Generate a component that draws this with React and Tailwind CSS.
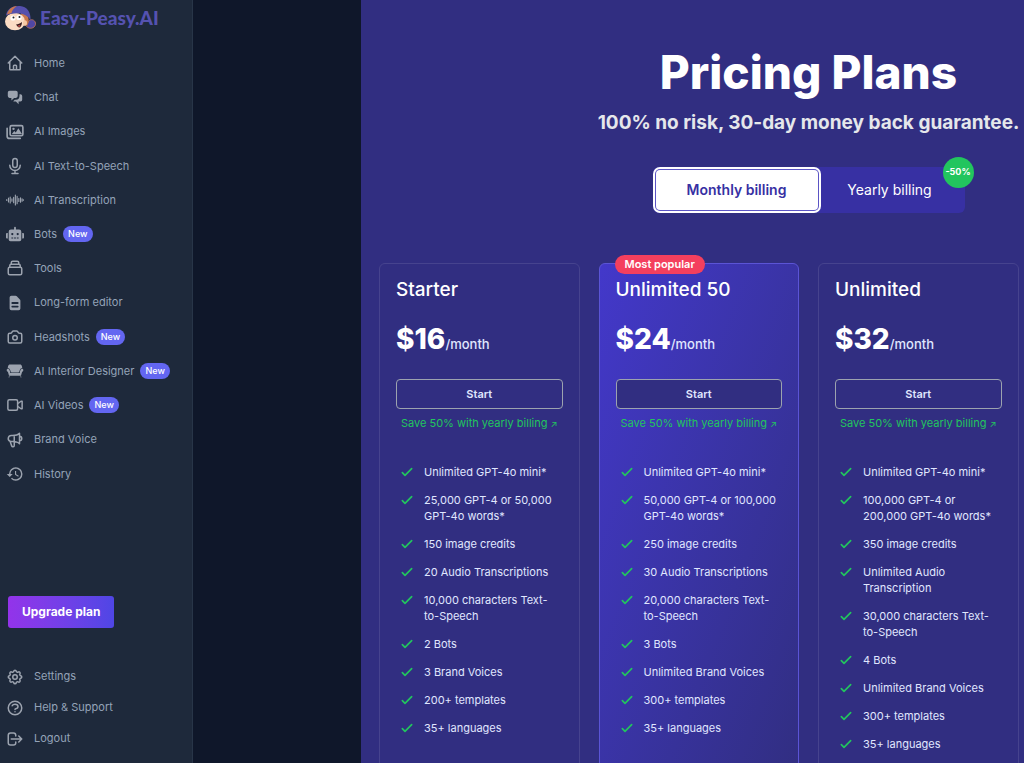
import { useState } from "react";
import {
  HiOutlineHome,
  HiChatAlt2,
  HiOutlineMicrophone,
  HiOutlineCollection,
  HiDocumentText,
  HiOutlineCamera,
  HiOutlineSpeakerphone,
  HiOutlineCog,
  HiOutlineQuestionMarkCircle,
  HiOutlineLogout,
  HiOutlineCheck,
} from "react-icons/hi";
import { FaRobot } from "react-icons/fa";
import { GiSofa } from "react-icons/gi";
import { MdHistory } from "react-icons/md";

function ImagesIcon({ className }) {
  return (
    <svg viewBox="0 0 24 24" fill="none" stroke="currentColor" strokeWidth="2.2" className={className}>
      <rect x="5.500" y="3.500" width="17" height="13.500" rx="2" />
      <path d="M1.500 7v10.500a3 3 0 003 3H19" strokeLinecap="round" />
      <path d="M7.500 15l3.500-4.500 2 2 3.500-5.500 5 8z" fill="currentColor" stroke="none" />
      <circle cx="10" cy="7.800" r="1.600" fill="currentColor" stroke="none" />
    </svg>
  );
}

function WaveIcon({ className }) {
  return (
    <svg viewBox="0 0 24 24" fill="none" stroke="currentColor" strokeWidth="1.500" strokeLinecap="round" className={className}>
      <path d="M1 11.500v1M3.300 9.500v5M5.600 8v8M7.900 10.500v3M10.200 8.500v7M12.500 5.500v13M14.800 7v10M17.100 10v4M19.400 9v6M21.500 10.500v3M23.300 11.700v.6" />
    </svg>
  );
}

function VideoIcon({ className }) {
  return (
    <svg viewBox="0 0 24 24" fill="none" stroke="currentColor" strokeWidth="2" strokeLinejoin="round" className={className}>
      <rect x="2.500" y="5" width="13" height="14" rx="2" />
      <path d="M16 10l4-3h1.500v10H20l-4-3" />
    </svg>
  );
}

const mainLinks = [
  { label: "Home", icon: HiOutlineHome },
  { label: "Chat", icon: HiChatAlt2 },
  { label: "AI Images", icon: ImagesIcon },
  { label: "AI Text-to-Speech", icon: HiOutlineMicrophone },
  { label: "AI Transcription", icon: WaveIcon },
  { label: "Bots", icon: FaRobot, isNew: true },
  { label: "Tools", icon: HiOutlineCollection },
  { label: "Long-form editor", icon: HiDocumentText },
  { label: "Headshots", icon: HiOutlineCamera, isNew: true },
  { label: "AI Interior Designer", icon: GiSofa, isNew: true },
  { label: "AI Videos", icon: VideoIcon, isNew: true },
  { label: "Brand Voice", icon: HiOutlineSpeakerphone },
  { label: "History", icon: MdHistory },
];

const footerLinks = [
  { label: "Settings", icon: HiOutlineCog },
  { label: "Help & Support", icon: HiOutlineQuestionMarkCircle },
  { label: "Logout", icon: HiOutlineLogout },
];

const plans = [
  {
    name: "Starter",
    price: 16,
    features: [
      "Unlimited GPT-4o mini*",
      "25,000 GPT-4 or 50,000 GPT-4o words*",
      "150 image credits",
      "20 Audio Transcriptions",
      "10,000 characters Text-to-Speech",
      "2 Bots",
      "3 Brand Voices",
      "200+ templates",
      "35+ languages",
    ],
  },
  {
    name: "Unlimited 50",
    price: 24,
    popular: true,
    features: [
      "Unlimited GPT-4o mini*",
      "50,000 GPT-4 or 100,000 GPT-4o words*",
      "250 image credits",
      "30 Audio Transcriptions",
      "20,000 characters Text-to-Speech",
      "3 Bots",
      "Unlimited Brand Voices",
      "300+ templates",
      "35+ languages",
    ],
  },
  {
    name: "Unlimited",
    price: 32,
    features: [
      "Unlimited GPT-4o mini*",
      "100,000 GPT-4 or 200,000 GPT-4o words*",
      "350 image credits",
      "Unlimited Audio Transcription",
      "30,000 characters Text-to-Speech",
      "4 Bots",
      "Unlimited Brand Voices",
      "300+ templates",
      "35+ languages",
    ],
  },
];

function Logo() {
  return (
    <a href="#" className="flex items-center gap-1 pl-1 h-9">
      <svg viewBox="0 0 32 27" className="w-8 h-7 shrink-0" aria-hidden="true">
        <path d="M25 16c3-2 7 0 6.500 4-1 4-6 5-9 2z" fill="#4f46a5" stroke="#a86a5c" strokeWidth="1" />
        <path d="M17 8c6-1 9 5 7 11-1 3-5 3-6 0z" fill="#c9774d" />
        <ellipse cx="11" cy="17" rx="10" ry="8.800" fill="#fbdcc4" />
        <ellipse cx="21" cy="18.500" rx="2" ry="2.800" fill="#f7c9a5" />
        <path d="M2 11C3 4 9 1 16 1.500c7 .5 11 6 10.500 14-3-4-6-6-10-6.500-5-.5-10 0-14.500 2z" fill="#5550ad" />
        <path d="M3 10c1-5 5-8 10-8.500-3 2-5 4-5.500 7z" fill="#c9774d" />
        <circle cx="9" cy="13.500" r="2.600" fill="#fff" />
        <circle cx="15" cy="13" r="2.600" fill="#fff" />
        <circle cx="9.500" cy="13" r="1" fill="#222" />
        <circle cx="15.500" cy="12.500" r="1" fill="#222" />
        <path d="M12 20c2 0 4-1 6-2.500 0 2.500-1 5-2.500 5.500-1.500 0-2.500-1.500-3.500-3z" fill="#3b1d1d" />
        <path d="M13.500 21.500c1-1 2-1 3-.5-1 1.500-1.500 1.500-3 .5z" fill="#e0605a" />
      </svg>
      <span className="font-['Lato'] font-black text-[19px] text-[#5552b0]">Easy-Peasy.AI</span>
    </a>
  );
}

function NavLink({ label, icon: Icon, isNew }) {
  return (
    <a href="#" className="flex items-center text-[11px] text-[#94a3b8] hover:text-white">
      <Icon className="w-[18px] h-[18px] mr-[10px] shrink-0 text-[#9ca3af]" />
      <span>{label}</span>
      {isNew && (
        <span className="ml-[6px] px-[5px] h-4 leading-4 rounded-full bg-[#6366f1] text-[9px] font-medium text-white">
          New
        </span>
      )}
    </a>
  );
}

function Sidebar() {
  return (
    <aside className="w-[193px] shrink-0 min-h-screen flex flex-col bg-[#1e293b] border-r border-[#283548]">
      <Logo />
      <nav className="mt-[10px] pl-[6px] grid auto-rows-fr h-[445px]">
        {mainLinks.map((link) => (
          <NavLink key={link.label} {...link} />
        ))}
      </nav>
      <div className="mt-auto pl-2">
        <button
          type="button"
          className="h-8 px-[14px] rounded-[3px] bg-gradient-to-r from-[#9333ea] to-[#4f46e5] text-[12px] font-bold text-white"
        >
          Upgrade plan
        </button>
      </div>
      <nav className="mt-[33px] mb-[9px] pl-[6px] grid auto-rows-[31px]">
        {footerLinks.map((link) => (
          <NavLink key={link.label} {...link} />
        ))}
      </nav>
    </aside>
  );
}

function BillingToggle({ billing, onChange }) {
  const active = "bg-white text-[#3730a3] font-semibold shadow-[0_0_0_1px_#5b54c4,0_0_0_3px_#fff]";
  const idle = "text-white";

  return (
    <div className="relative flex p-[3px] h-[46px] w-[312px] rounded-md bg-[#3730a3] text-sm">
      <button
        type="button"
        onClick={() => onChange("monthly")}
        className={`w-[162px] rounded ${billing === "monthly" ? active : idle}`}
      >
        Monthly billing
      </button>
      <button
        type="button"
        onClick={() => onChange("yearly")}
        className={`flex-1 rounded ${billing === "yearly" ? active : idle}`}
      >
        Yearly billing
      </button>
      <span className="absolute -top-[10px] -right-[9px] w-[31px] h-[31px] rounded-full bg-[#22c55e] flex items-center justify-center text-[9px] font-bold text-white">
        -50%
      </span>
    </div>
  );
}

function PlanCard({ plan }) {
  return (
    <div
      className={`relative rounded-md border px-4 pb-8 ${
        plan.popular
          ? "border-[#5b54d6] bg-gradient-to-br from-[#4338ca] to-[#312e81]"
          : "border-[#46438e]"
      }`}
    >
      {plan.popular && (
        <span className="absolute -top-[9px] left-[15px] h-[19px] px-[10px] rounded-full bg-[#f43f5e] text-[11px] leading-[19px] font-semibold text-white">
          Most popular
        </span>
      )}
      <h3 className="mt-3 text-[19px] leading-7 font-medium text-white">{plan.name}</h3>
      <p className="mt-[17px] flex items-baseline text-white">
        <span className="text-[28px] leading-9 font-extrabold">${plan.price}</span>
        <span className="text-[13px] font-medium text-[#e0e7ff]">/month</span>
      </p>
      <button
        type="button"
        className="mt-[22px] w-full h-[30px] rounded border border-[#9ca3af] bg-[#312e81] text-[11px] font-semibold text-[#e0e7ff]"
      >
        Start
      </button>
      <a href="#" className="mt-[6px] block text-center text-[11px] leading-4 text-[#22c55e]">
        Save 50% with yearly billing <span className="text-[9px]">↗</span>
      </a>
      <ul className="mt-8 pl-[2px] pr-1 space-y-3">
        {plan.features.map((feature) => (
          <li key={feature} className="flex text-[11px] leading-4 text-[#e0e7ff]">
            <HiOutlineCheck className="w-[18px] h-4 mr-2 shrink-0 text-[#22c55e] [&_path]:stroke-[2.5]" />
            <span>{feature}</span>
          </li>
        ))}
      </ul>
    </div>
  );
}

export default function App() {
  const [billing, setBilling] = useState("monthly");

  return (
    <div className="flex h-screen overflow-hidden bg-[#0f172a] font-[Inter,sans-serif]">
      <Sidebar />
      <main className="flex-1 min-w-0 flex overflow-hidden">
        {/* Four plan columns wide, it runs past the right edge on small screens */}
        <section className="ml-[168px] min-w-[895px] flex-1 px-[18px] pt-12 bg-[#312e81]">
          <div className="flex flex-col items-center">
            <h1 className="text-[46px] leading-[48px] font-extrabold text-white">Pricing Plans</h1>
            <p className="mt-[13px] text-[19px] leading-7 font-bold text-[#e5e7eb]">
              100% no risk, 30-day money back guarantee.
            </p>
            <div className="mt-[30px]">
              <BillingToggle billing={billing} onChange={setBilling} />
            </div>
          </div>
          <div className="mt-[50px] grid grid-cols-4 gap-[19px]">
            {plans.map((plan) => (
              <PlanCard key={plan.name} plan={plan} />
            ))}
          </div>
        </section>
      </main>
    </div>
  );
}
